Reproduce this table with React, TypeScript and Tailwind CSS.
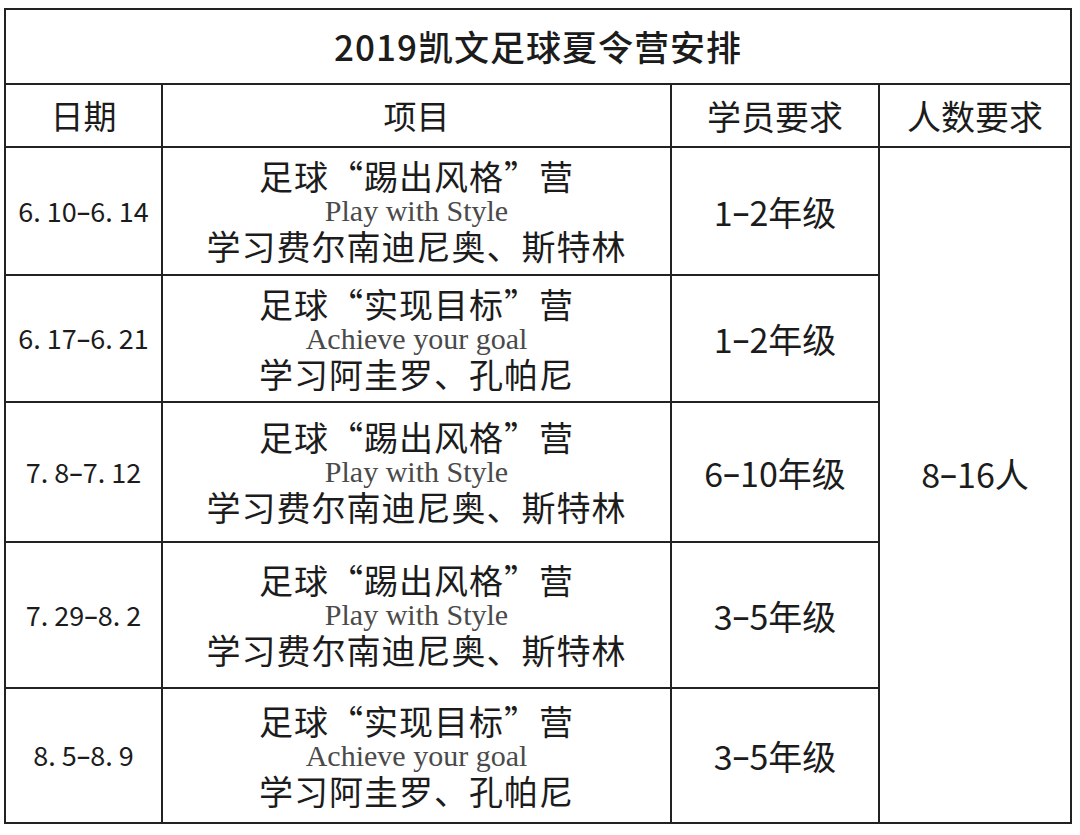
import React from 'react';

type Camp = {
  date: string;
  title: string;
  en: string;
  learn: string;
  grade: string;
};

const camps: Camp[] = [
  { date: '6. 10-6. 14', title: '足球“踢出风格”营', en: 'Play with Style', learn: '学习费尔南迪尼奥、斯特林', grade: '1-2年级' },
  { date: '6. 17-6. 21', title: '足球“实现目标”营', en: 'Achieve your goal', learn: '学习阿圭罗、孔帕尼', grade: '1-2年级' },
  { date: '7. 8-7. 12', title: '足球“踢出风格”营', en: 'Play with Style', learn: '学习费尔南迪尼奥、斯特林', grade: '6-10年级' },
  { date: '7. 29-8. 2', title: '足球“踢出风格”营', en: 'Play with Style', learn: '学习费尔南迪尼奥、斯特林', grade: '3-5年级' },
  { date: '8. 5-8. 9', title: '足球“实现目标”营', en: 'Achieve your goal', learn: '学习阿圭罗、孔帕尼', grade: '3-5年级' },
];

const cjk = "font-['Noto_Sans_CJK_SC','Noto_Sans',sans-serif]";

// range text: draw the dash as a wider en dash like the original sheet
const Range = ({ text }: { text: string }) => {
  const [a, b] = text.split('-');
  return (
    <>
      {a}
      <span className="font-['Noto_Sans',sans-serif]">–</span>
      {b}
    </>
  );
};

const App: React.FC = () => {
  return (
    <div className={`w-[1080px] h-[835px] bg-white pt-[8px] pl-[4px] text-[#1c1c1c] ${cjk}`}>
      <div className="grid w-[1068px] grid-cols-[155px_507px_206px_190px] grid-rows-[73px_61px_126px_125px_138px_144px_133px] gap-[2px] bg-[#222] p-[2px]">
        {/* Title */}
        <div className="col-span-4 bg-white flex items-center justify-center text-[35px] font-medium tracking-[1px]">
          2019凯文足球夏令营安排
        </div>

        {/* Header */}
        <div className="bg-white flex items-center justify-center text-[33px]">日期</div>
        <div className="bg-white flex items-center justify-center text-[33px]">项目</div>
        <div className="bg-white flex items-center justify-center text-[34px]">学员要求</div>
        <div className="bg-white flex items-center justify-center text-[34px]">人数要求</div>

        {camps.map((c, i) => (
          <React.Fragment key={i}>
            <div className="bg-white flex items-center justify-center text-[27px] whitespace-pre">
              <Range text={c.date} />
            </div>
            <div className="bg-white flex flex-col items-center justify-center">
              <div className="text-[34px] leading-[36px] tracking-[1px]">{c.title}</div>
              <div className="font-['Liberation_Serif','Times_New_Roman',serif] text-[30px] leading-[34px] text-[#4a4a4a]">{c.en}</div>
              <div className="text-[34px] leading-[36px] tracking-[1px]">{c.learn}</div>
            </div>
            <div className="bg-white flex items-center justify-center text-[34px]">
              <Range text={c.grade} />
            </div>
            {i === 0 && (
              <div className="row-span-5 bg-white flex items-center justify-center pb-6 text-[34px]">
                <Range text="8-16人" />
              </div>
            )}
          </React.Fragment>
        ))}
      </div>
    </div>
  );
};

export default App;
